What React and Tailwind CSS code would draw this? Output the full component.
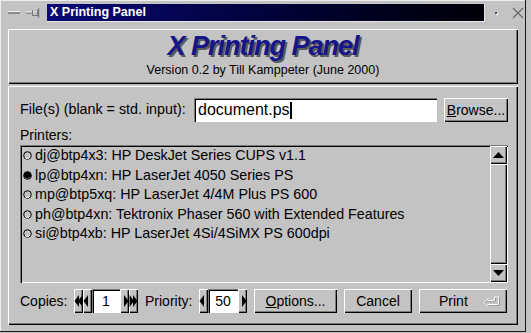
import React from 'react';

const raised = 'shadow-[inset_1px_1px_0_#ffffff,inset_-1px_-1px_0_#000000,inset_-2px_-2px_0_#7b7b7b]';
const sunken = 'shadow-[inset_1px_1px_0_#7b7b7b,inset_2px_2px_0_#000000,inset_-1px_-1px_0_#ffffff]';

const printers = [
  { id: 'dj@btp4x3', name: 'HP DeskJet Series CUPS v1.1', on: false },
  { id: 'lp@btp4xn', name: 'HP LaserJet 4050 Series PS', on: true },
  { id: 'mp@btp5xq', name: 'HP LaserJet 4/4M Plus PS 600', on: false },
  { id: 'ph@btp4xn', name: 'Tektronix Phaser 560 with Extended Features', on: false },
  { id: 'si@btp4xb', name: 'HP LaserJet 4Si/4SiMX PS 600dpi', on: false },
];

const Arrow = ({ dir, double }) => (
  <svg width="9" height="14" viewBox="0 0 9 14">
    {dir === 'left' ? (
      <>
        <polygon points="0.5,7 5,1 5,13" fill="#000" />
        {double && <polygon points="4,7 8.5,1 8.5,13" fill="#000" />}
      </>
    ) : (
      <>
        <polygon points="8.5,7 4,1 4,13" fill="#000" />
        {double && <polygon points="5,7 0.5,1 0.5,13" fill="#000" />}
      </>
    )}
  </svg>
);

const SpinBtn = ({ dir, double }) => (
  <div className={`w-[9px] h-[24px] flex items-center justify-center bg-[#c3c3c3] ${raised}`}>
    <Arrow dir={dir} double={double} />
  </div>
);

const Radio = ({ on }) => (
  <svg width="9" height="9" viewBox="0 0 9 9" className="shrink-0">
    <circle cx="4.5" cy="4.5" r="3.8" fill={on ? '#000' : '#c3c3c3'} stroke="#000" strokeWidth="1" />
    <path d="M2 6.5 A3 3 0 0 0 7 6" stroke={on ? '#6b6b6b' : '#ffffff'} strokeWidth="1" fill="none" />
  </svg>
);

const App = () => {
  return (
    <div className="w-[531px] h-[333px] bg-[#c3c3c3] font-['Liberation_Sans',Arial,sans-serif] text-black overflow-hidden">
      <div className="w-[526px] h-[332px] border-r border-b border-[#1a1a1a] shadow-[inset_1px_1px_0_#eeeeee]">
        {/* title bar */}
        <div className="h-[25px] flex items-center pl-[8px]">
          <div className="w-[12px] h-[3px] bg-[#8a8a8a] border-t border-[#f4f4f4]"></div>
          <svg width="15" height="10" viewBox="0 0 15 10" className="ml-[6px]">
            <path d="M0 5 H6" stroke="#8a8a8a" strokeWidth="2" />
            <path d="M0 4 H6" stroke="#f4f4f4" strokeWidth="1" />
            <rect x="6.5" y="2.5" width="5" height="5" fill="#c3c3c3" stroke="#7a7a7a" />
            <path d="M12.5 0.5 V9.5" stroke="#7a7a7a" strokeWidth="1.5" />
            <path d="M7 3 H11" stroke="#ffffff" />
          </svg>
          <div className="ml-[6px] w-[438px] h-[18px] bg-gradient-to-r from-[#0a0a78] to-[#000008] border-r border-b border-[#e8e8e8] flex items-center pl-[3px]">
            <span className="text-white font-bold text-[12.5px] leading-none">X Printing Panel</span>
          </div>
          <div className="ml-[10px] w-[2px] h-[2px] bg-[#505050] shadow-[1px_1px_0_#ffffff]"></div>
          <svg width="12" height="12" viewBox="0 0 12 12" className="ml-[15px]">
            <path d="M1 1 L11 11 M11 1 L1 11" stroke="#6a6a6a" strokeWidth="1.2" />
          </svg>
        </div>

        <div className="pl-[8px]">
          {/* header panel */}
          <div className={`mt-[4px] w-[510px] h-[55px] flex flex-col items-center ${raised}`}>
            <div className="mt-[2px] text-[27px] leading-[31px] font-bold italic text-[#16168a] [text-shadow:2px_2px_0_#5a5a5a] tracking-[-1px]">
              X Printing Panel
            </div>
            <div className="text-[12.5px] leading-[14px] mt-[1px]">Version 0.2 by Till Kamppeter (June 2000)</div>
          </div>

          {/* main panel */}
          <div className={`mt-[2px] w-[510px] h-[239px] pt-[12px] pl-[12px] pr-[10px] flex flex-col ${raised}`}>
            <div className="flex items-center h-[24px]">
              <span className="text-[14.3px] w-[174px]">File(s) (blank = std. input):</span>
              <div className={`w-[243px] h-[24px] bg-white flex items-center pl-[4px] ${sunken}`}>
                <span className="text-[16px]">document.ps</span>
                <div className="w-[2px] h-[17px] bg-black"></div>
              </div>
              <div className={`ml-[7px] w-[64px] h-[24px] flex items-center justify-center text-[14px] ${raised}`}>
                <span><span className="underline">B</span>rowse...</span>
              </div>
            </div>

            <div className="text-[14px] leading-[16px] mt-[5px] h-[18px]">Printers:</div>

            <div className={`w-[488px] h-[138px] flex ${sunken}`}>
              <div className="flex-1 pt-[1px] pl-[3px]">
                {printers.map((p) => (
                  <div key={p.id} className="h-[19.5px] flex items-center gap-[3px] text-[14.3px] whitespace-nowrap">
                    <Radio on={p.on} />
                    <span>{p.id}: {p.name}</span>
                  </div>
                ))}
              </div>
              <div className="w-[17px] mr-[1px] pt-[1px] pb-[1px] flex flex-col">
                <div className={`h-[18px] flex items-center justify-center ${raised}`}>
                  <svg width="11" height="6" viewBox="0 0 11 6"><polygon points="5.5,0 11,6 0,6" fill="#000" /></svg>
                </div>
                <div className={`flex-1 ${raised}`}></div>
                <div className={`h-[18px] flex items-center justify-center ${raised}`}>
                  <svg width="11" height="6" viewBox="0 0 11 6"><polygon points="0,0 11,0 5.5,6" fill="#000" /></svg>
                </div>
              </div>
            </div>

            <div className="mt-[6px] flex items-center h-[24px] text-[14px]">
              <span className="w-[54px]">Copies:</span>
              <SpinBtn dir="left" double />
              <SpinBtn dir="left" />
              <div className={`w-[28px] h-[24px] bg-white flex items-center justify-center ${sunken}`}>1</div>
              <SpinBtn dir="right" />
              <SpinBtn dir="right" double />
              <span className="ml-[7px] w-[54px]">Priority:</span>
              <SpinBtn dir="left" />
              <div className={`w-[30px] h-[24px] bg-white flex items-center justify-center ${sunken}`}>50</div>
              <SpinBtn dir="right" />
              <div className={`ml-[7px] w-[83px] h-[24px] flex items-center justify-center ${raised}`}>
                <span><span className="underline">O</span>ptions...</span>
              </div>
              <div className={`ml-[7px] w-[68px] h-[24px] flex items-center justify-center ${raised}`}>Cancel</div>
              <div className={`ml-[7px] w-[88px] h-[24px] flex items-center pl-[20px] ${raised}`}>
                <span>Print</span>
                <svg width="17" height="11" viewBox="0 0 17 11" className="ml-[15px]">
                  <path d="M1 6.5 L5 2.5 V4.5 H11.5 V1 H15.5 V8.5 H5 V10.5 Z" fill="none" stroke="#7b7b7b" strokeWidth="1" transform="translate(0.7 0.5)" />
                  <path d="M1 6.5 L5 2.5 V4.5 H11.5 V1 H15.5 V8.5 H5 V10.5 Z" fill="none" stroke="#ffffff" strokeWidth="1" />
                </svg>
              </div>
            </div>
          </div>
        </div>
      </div>
    </div>
  );
};

export default App;
